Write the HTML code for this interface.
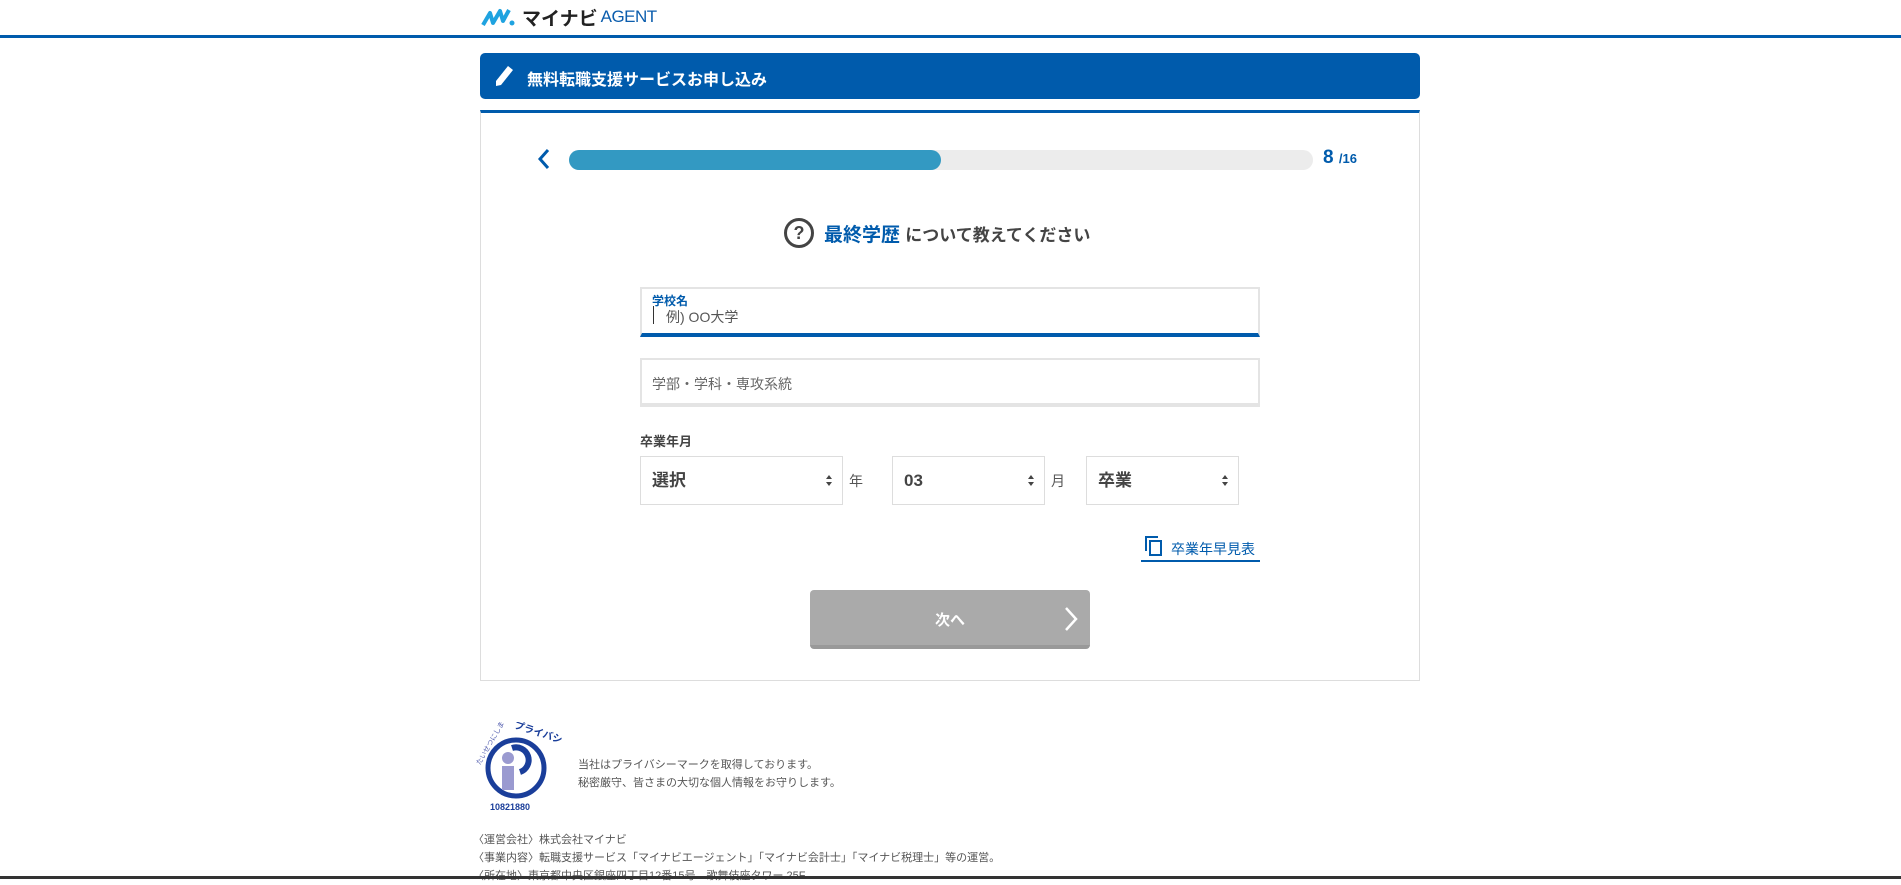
<!DOCTYPE html>
<html><head><meta charset="utf-8"><style>
*{margin:0;padding:0;box-sizing:border-box}
body{width:1901px;height:879px;overflow:hidden;background:#fff;font-family:"Liberation Sans","Noto Sans CJK JP",sans-serif;color:#333;position:relative}
.a{position:absolute}
.sel{position:absolute;top:456px;height:49px;border:1px solid #ddd;background:#fff;font-size:17px;line-height:47px;font-weight:bold;color:#444;padding:0 0 0 11px}
.sel:after{content:"";position:absolute;right:10px;top:18px;border:3px solid transparent;border-bottom:4px solid #444;border-top:0}
.sel:before{content:"";position:absolute;right:10px;top:25px;border:3px solid transparent;border-top:4px solid #444;border-bottom:0}
</style></head><body>
<div class="a" style="left:481px;top:6px;height:22px;display:flex;align-items:center">
<svg width="40" height="20" viewBox="0 0 40 20"><path d="M2 18 L9 6 L12 16 L19 4 L22 14 L28 3" stroke="#1fa3e0" stroke-width="4" fill="none" stroke-linejoin="round"/><circle cx="31" cy="16" r="2.5" fill="#1fa3e0"/></svg>
<span style="font-size:19px;font-weight:bold;color:#222;margin-left:1px">マイナビ</span><span style="font-size:17px;color:#0b5dad;margin-left:3px;letter-spacing:-0.5px">AGENT</span></div>
<div class="a" style="left:0;top:35px;width:1901px;height:3px;background:#005bac"></div>
<div class="a" style="left:480px;top:53px;width:940px;height:46px;background:#005bac;border-radius:5px;color:#fff;font-weight:bold;font-size:16px;padding:13px 0 0 47px">無料転職支援サービスお申し込み
<svg class="a" style="left:14px;top:12px" width="20" height="22" viewBox="0 0 20 22"><path d="M14 1 L19 5 L7 20 L2 21 L2 16 Z" fill="#fff"/></svg></div>
<div class="a" style="left:480px;top:110px;width:940px;height:571px;border:1px solid #ddd;border-top:3px solid #005bac"></div>
<svg class="a" style="left:536px;top:148px" width="16" height="22" viewBox="0 0 16 22"><path d="M12 2 L4 11 L12 20" stroke="#005bac" stroke-width="3" fill="none"/></svg>
<div class="a" style="left:569px;top:150px;width:744px;height:20px;background:#ececec;border-radius:10px"></div>
<div class="a" style="left:569px;top:150px;width:372px;height:20px;background:#3399c2;border-radius:10px"></div>
<div class="a" style="left:1323px;top:147px;color:#005bac;font-weight:bold;font-size:19px">8 <span style="font-size:13px">/16</span></div>
<div class="a" style="left:784px;top:218px;width:30px;height:30px;border:3px solid #444;border-radius:50%;text-align:center;font-weight:bold;font-size:18px;line-height:24px;color:#444">?</div>
<div class="a" style="left:824px;top:220px;font-size:19px;font-weight:bold;color:#005bac">最終学歴 <span style="color:#444;font-size:17px">について教えてください</span></div>
<div class="a" style="left:640px;top:287px;width:620px;height:50px;border:2px solid #e4e4e4;border-bottom:4px solid #005bac">
<div class="a" style="left:10px;top:3px;font-size:12px;font-weight:bold;color:#005bac">学校名</div>
<div class="a" style="left:11px;top:17px;width:1px;height:18px;background:#333"></div>
<div class="a" style="left:24px;top:18px;font-size:14px;color:#555">例) OO大学</div></div>
<div class="a" style="left:640px;top:358px;width:620px;height:49px;border:2px solid #e4e4e4;border-bottom:4px solid #e4e4e4;font-size:14px;color:#666;padding:14px 0 0 10px">学部・学科・専攻系統</div>
<div class="a" style="left:640px;top:431px;font-size:13px;font-weight:bold;color:#444">卒業年月</div>
<div class="sel" style="left:640px;width:203px">選択</div>
<div class="a" style="left:849px;top:471px;font-size:14px;color:#555">年</div>
<div class="sel" style="left:892px;width:153px">03</div>
<div class="a" style="left:1051px;top:471px;font-size:14px;color:#555">月</div>
<div class="sel" style="left:1086px;width:153px">卒業</div>
<svg class="a" style="left:1145px;top:536px" width="18" height="20" viewBox="0 0 18 20"><path d="M1 15 V1 H13" stroke="#005bac" stroke-width="2" fill="none"/><rect x="5" y="5" width="11" height="14" stroke="#005bac" stroke-width="2" fill="none"/></svg>
<div class="a" style="left:1171px;top:539px;font-size:14px;color:#005bac">卒業年早見表</div>
<div class="a" style="left:1141px;top:560px;width:119px;height:2px;background:#005bac"></div>
<div class="a" style="left:810px;top:590px;width:280px;height:59px;background:#aaa;border-radius:4px;border-bottom:4px solid #999;color:#fff;font-weight:bold;font-size:15px;text-align:center;padding-top:19px">次へ
<svg class="a" style="left:253px;top:16px" width="16" height="26" viewBox="0 0 16 26"><path d="M3 2 L13 13 L3 24" stroke="#fff" stroke-width="2.5" fill="none"/></svg></div>
<svg class="a" style="left:472px;top:722px" width="90" height="90" viewBox="0 0 90 90"><text x="6" y="40" font-size="7" fill="#5560b0" transform="rotate(-60 10 40)" font-family="Noto Sans CJK JP">たいせつにします</text><text x="40" y="12" font-size="10" font-weight="bold" fill="#1a3e9a" font-family="Noto Sans CJK JP" transform="rotate(18 60 14)">プライバシー</text><circle cx="44" cy="46" r="28" fill="none" stroke="#1a3e9a" stroke-width="5"/><circle cx="36" cy="36" r="6" fill="#9a9ad0"/><rect x="30" y="44" width="12" height="24" fill="#9a9ad0"/><path d="M40 26 A12 12 0 1 1 48 50" stroke="#1a3e9a" stroke-width="6" fill="none"/><text x="18" y="88" font-size="9" font-weight="bold" fill="#1a3e9a">10821880</text></svg>
<div class="a" style="left:578px;top:756px;font-size:11px;color:#555;line-height:18px">当社はプライバシーマークを取得しております。<br>秘密厳守、皆さまの大切な個人情報をお守りします。</div>
<div class="a" style="left:473px;top:831px;font-size:11px;color:#555;line-height:18px">〈運営会社〉株式会社マイナビ<br>〈事業内容〉転職支援サービス「マイナビエージェント」「マイナビ会計士」「マイナビ税理士」等の運営。<br>〈所在地〉東京都中央区銀座四丁目12番15号　歌舞伎座タワー 25F</div>
<div class="a" style="left:0;top:876px;width:1901px;height:3px;background:#333"></div>
</body></html>
